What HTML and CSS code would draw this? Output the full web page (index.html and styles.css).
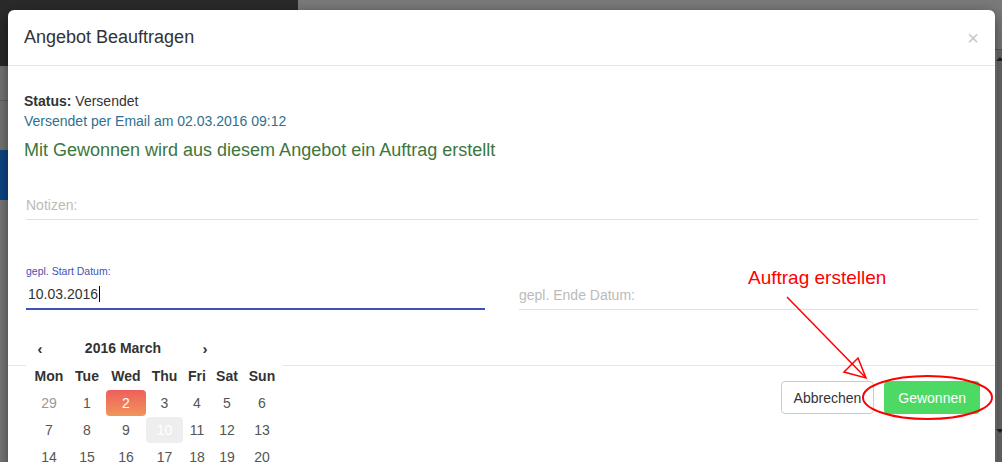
FILE: index.html
```html
<!DOCTYPE html>
<html lang="de">
<head>
  <meta charset="UTF-8">
  <meta name="viewport" content="width=device-width, initial-scale=1.0">
  <title>Angebot Beauftragen</title>
  <link rel="stylesheet" href="styles.css">
</head>
<body>

<!-- Page behind the dialog (dimmed) -->
<div class="page">
  <div class="page-main">
    <div class="page-top">
      <div class="page-brand"></div>
    </div>
    <div class="page-nav">
      <div class="nav-item"></div>
      <div class="nav-gap"></div>
      <div class="nav-item active"></div>
    </div>
  </div>
  <div class="page-scroll">
    <span class="scroll-arrow up"></span>
    <span class="scroll-arrow down"></span>
  </div>
</div>

<!-- Dialog -->
<div class="modal">
  <div class="modal-header">
    <h4 class="modal-title">Angebot Beauftragen</h4>
    <span class="close">&times;</span>
  </div>

  <div class="modal-body">
    <div class="status"><b>Status:</b> Versendet</div>
    <div class="sent-info">Versendet per Email am 02.03.2016 09:12</div>
    <div class="lead-note">Mit Gewonnen wird aus diesem Angebot ein Auftrag erstellt</div>

    <div class="field notes">
      <div class="input"><span class="placeholder">Notizen:</span></div>
    </div>

    <div class="date-row">
      <div class="field">
        <label class="field-label">gepl. Start Datum:</label>
        <div class="input focused">10.03.2016<span class="caret"></span></div>
      </div>
      <div class="field">
        <label class="field-label"></label>
        <div class="input"><span class="placeholder">gepl. Ende Datum:</span></div>
      </div>
    </div>
  </div>

  <div class="modal-footer">
    <button class="btn btn-default">Abbrechen</button>
    <button class="btn btn-success">Gewonnen</button>
  </div>

  <!-- Datepicker dropdown -->
  <div class="datepicker">
    <div class="dp-head">
      <span class="dp-nav">&lsaquo;</span>
      <span class="dp-title">2016 March</span>
      <span class="dp-nav">&rsaquo;</span>
    </div>
    <div class="dp-names">
      <span>Mon</span><span>Tue</span><span>Wed</span><span>Thu</span><span>Fri</span><span>Sat</span><span>Sun</span>
    </div>
    <div class="dp-days">
      <span class="old">29</span><span>1</span><span class="active">2</span><span>3</span><span>4</span><span>5</span><span>6</span>
      <span>7</span><span>8</span><span>9</span><span class="selected">10</span><span>11</span><span>12</span><span>13</span>
      <span>14</span><span>15</span><span>16</span><span>17</span><span>18</span><span>19</span><span>20</span>
    </div>
  </div>
</div>

<!-- Red markup on top -->
<div class="note-label">Auftrag erstellen</div>
<svg class="note-marks" width="1002" height="462" viewBox="0 0 1002 462">
  <line x1="787" y1="297" x2="865" y2="377" stroke="#f00" stroke-width="1.5"/>
  <polygon points="844,372 858,358 866,378" fill="none" stroke="#f00" stroke-width="1.5"/>
  <ellipse cx="927.5" cy="397.5" rx="64.5" ry="21.5" fill="none" stroke="#f00" stroke-width="2"/>
</svg>

</body>
</html>
```

FILE: styles.css
```css
* {
  box-sizing: border-box;
}

body {
  margin: 0;
  width: 1002px;
  height: 462px;
  overflow: hidden;
  position: relative;
  font-family: "Liberation Sans", Arial, sans-serif;
  font-size: 14px;
  color: #333;
  background-color: #7a7a7a;
}

/* Page behind the dialog */
.page {
  display: flex;
  height: 462px;
}

.page-main {
  flex: 1;
}

.page-top {
  height: 66px;
}

.page-brand {
  width: 298px;
  height: 66px;
  background-color: #2a2a2a;
}

.page-nav {
  width: 8px;
  background-color: #777;
}

.nav-item {
  height: 35px;
  border-bottom: 1px solid #666;
}

.nav-gap {
  height: 49px;
}

.nav-item.active {
  height: 50px;
  border-bottom: none;
  background-color: #0d4788;
}

.page-scroll {
  position: relative;
  width: 7px;
  margin-top: 49px;
  border-top: 1px solid #5a5a5a;
  background: linear-gradient(to right, #7e7e7e 0, #7e7e7e 2px, #6a6a6a 2px);
}

.scroll-arrow {
  position: absolute;
  left: 1px;
  width: 0;
  height: 0;
  border-left: 4px solid transparent;
  border-right: 4px solid transparent;
}

.scroll-arrow.up {
  top: 7px;
  border-bottom: 4px solid #222;
}

.scroll-arrow.down {
  top: 379px;
  border-top: 4px solid #222;
}

/* Dialog */
.modal {
  position: absolute;
  left: 8px;
  top: 10px;
  width: 987px;
  height: 480px;
  background-color: #fff;
  border-radius: 6px;
  box-shadow: 0 5px 15px rgba(0, 0, 0, 0.5);
}

.modal-header {
  display: flex;
  justify-content: space-between;
  align-items: center;
  padding: 15px 16px;
  border-bottom: 1px solid #e5e5e5;
}

.modal-title {
  margin: 0;
  font-size: 18px;
  font-weight: normal;
  line-height: 25px;
}

.close {
  margin-right: 0;
  font-size: 20px;
  line-height: 1;
  color: #c8c8c8;
}

.modal-body {
  padding: 25px 15px 0 16px;
}

.status,
.sent-info {
  line-height: 20px;
}

.sent-info {
  color: #31708f;
}

.lead-note {
  margin-top: 8px;
  font-size: 18px;
  line-height: 22px;
  color: #3c763d;
}

/* Form fields */
.field {
  margin: 0 2px;
}

.field.notes {
  margin-top: 30px;
}

.input {
  display: flex;
  align-items: center;
  height: 29px;
  border-bottom: 1px solid #e0e0e0;
  color: #333;
}

.input.focused {
  padding-left: 2px;
  border-bottom: 2px solid #3f51b5;
}

.placeholder {
  color: #bbb;
}

.caret {
  width: 1px;
  height: 16px;
  margin-left: 1px;
  background-color: #000;
}

.date-row {
  display: flex;
  gap: 34px;
  margin: 44px 2px 0;
}

.date-row .field {
  flex: 1;
  margin: 0;
}

.field-label {
  display: block;
  height: 14px;
  margin-bottom: 2px;
  font-size: 10.5px;
  line-height: 14px;
  color: #3f51b5;
}

.date-row .input {
  height: 30px;
}

/* Footer */
.modal-footer {
  display: flex;
  justify-content: flex-end;
  gap: 10px;
  margin-top: 55px;
  padding: 15px;
  border-top: 1px solid #e5e5e5;
}

.btn {
  height: 33px;
  padding: 0 12px;
  font-family: "Liberation Sans", Arial, sans-serif;
  font-size: 14px;
  border: 1px solid #ccc;
  border-radius: 4px;
  background-color: #fff;
  color: #333;
}

.btn-success {
  padding: 0 13px;
  border-color: #4cd964;
  background-color: #4cd964;
  color: #fff;
}

/* Datepicker */
.datepicker {
  position: absolute;
  left: 18px;
  top: 324px;
  width: 257px;
  padding-left: 4px;
  background-color: #fff;
  z-index: 10;
}

.dp-head {
  display: grid;
  grid-template-columns: 20px 146px 18px;
  align-items: center;
  height: 28px;
  text-align: center;
  font-weight: bold;
  color: #333;
}

.dp-nav {
  font-size: 15px;
}

.dp-names,
.dp-days {
  display: grid;
  grid-template-columns: 38px 38px 40px 37px 28px 32px 38px;
  text-align: center;
}

.dp-names span {
  height: 28px;
  line-height: 28px;
  font-weight: bold;
  color: #333;
}

.dp-days {
  row-gap: 1px;
}

.dp-days span {
  height: 26px;
  line-height: 26px;
  color: #555;
  border-radius: 4px;
}

.dp-days .old {
  color: #999;
}

.dp-days .active {
  color: #fff;
  background: linear-gradient(to bottom, #ee5f5b, #f0955a);
}

.dp-days .selected {
  color: #fff;
  background-color: #eee;
}

/* Red markup */
.note-label {
  position: absolute;
  left: 748px;
  top: 267px;
  font-size: 19px;
  line-height: 22px;
  color: #f00;
}

.note-marks {
  position: absolute;
  left: 0;
  top: 0;
  pointer-events: none;
}
```
